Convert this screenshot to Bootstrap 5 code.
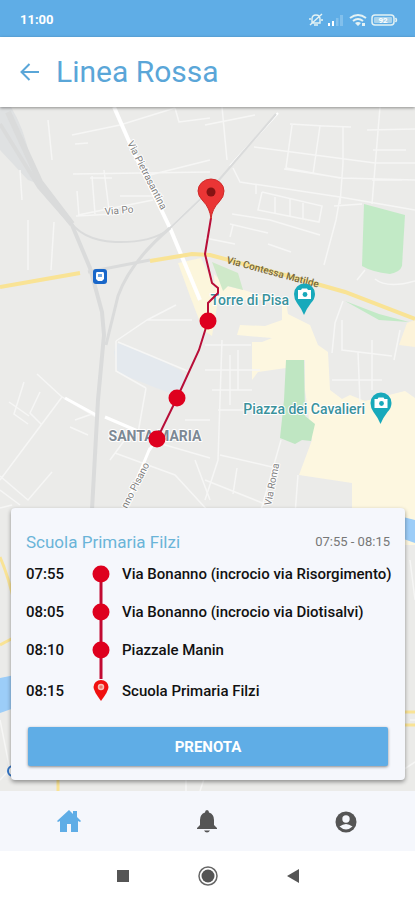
<!DOCTYPE html>
<html lang="it">
<head>
<meta charset="utf-8">
<meta name="viewport" content="width=device-width, initial-scale=1">
<title>Linea Rossa</title>
<link href="https://cdn.jsdelivr.net/npm/bootstrap@5.3.0/dist/css/bootstrap.min.css" rel="stylesheet">
<style>
:root { --sky: #5fade6; --panel: #f5f7fc; }
body { font-family: Roboto, sans-serif; color: #111; }
.status-bar { background: var(--sky); color: #fff; font-size: 13px; line-height: 16px; padding: 12px 17px 9px 20px; }
.app-bar { height: 70px; padding: 0 20px; box-shadow: 0 1px 3px rgba(0,0,0,.4); z-index: 2; }
.app-bar h1 { font-size: 30px; line-height: 36px; color: #5aa6d8; }
.map-area { padding: 11px 10px 11px 11px; background: #ebebe9; }
.map-area .route-map { inset: 0; }
.trip-card { background: var(--panel); border-radius: 4px; box-shadow: 0 2px 4px rgba(0,0,0,.4); padding: 21px 15px 14px; }
.trip-title { font-size: 17px; line-height: 26px; color: #6ab4d8; }
.trip-hours { font-size: 13px; line-height: 20px; color: #777; }
.stop-row { height: 38px; font-size: 15px; line-height: 20px; font-weight: 500; white-space: nowrap; }
.stop-row:last-child { height: 44px; }
.stop-time { flex: 0 0 60px; }
.stop-rail { flex: 0 0 30px; width: 30px; margin-right: 6px; }
.book-row { padding: 14px 2px 0; }
.btn-prenota { --bs-btn-bg: var(--sky); --bs-btn-color: #fff; --bs-btn-hover-bg: #4a9dda; --bs-btn-hover-color: #fff; --bs-btn-active-bg: #4a9dda; --bs-btn-active-color: #fff; height: 39px; font-size: 15px; line-height: 20px; font-weight: 700; border: 0; border-radius: 2px; box-shadow: 0 1px 3px rgba(0,0,0,.45); padding: 0; }
.tab-bar { background: var(--panel); height: 60px; }
.tab-bar a { color: #555; }
.tab-bar a.active { color: var(--sky); }
.system-bar { height: 49px; gap: 61px; padding: 0; }
.system-bar button { width: 24px; height: 24px; }
.lbl { paint-order: stroke; stroke: #fff; stroke-width: 2px; stroke-linejoin: round; }
</style>
</head>
<body>
<div class="d-flex flex-column min-vh-100 bg-white">
  <div class="status-bar d-flex justify-content-between align-items-center">
    <span class="fw-bold">11:00</span>
    <svg width="90" height="16" viewBox="308 12 90 16" fill="none" stroke="#e4f2f4" aria-hidden="true">
      <path d="M312 23v-4c0-3 2-4 4-4s4 1 4 4v4zM314 25h4M310 25l12-11M309 19h2M321 20h2" stroke-width="1.4"/>
      <path d="M328 26v-3h2v3zM332 26v-5h2v5z" fill="#fff" stroke="none"/>
      <path d="M336 26v-8h2.500v8zM340 26v-11h3v11z" fill="#82c0ec" stroke="none"/>
      <path d="M350 18q8-6 16 0M353 21q5-4 10 0" stroke-width="2"/>
      <path d="M355 23q3-2 6 0l-3 3zM362 23h3v3h-3z" fill="#e4f2f4" stroke="none"/>
      <rect x="372" y="15" width="22" height="10" rx="3" stroke-width="1.500"/>
      <path d="M395.500 18q2 2 0 4" stroke-width="1.500"/>
      <rect x="374" y="17" width="18" height="6" rx="1" fill="#a9d3ec" stroke="none"/>
      <text x="383" y="23" text-anchor="middle" font-size="8" font-weight="700" fill="#fff" stroke="none">92</text>
    </svg>
  </div>

  <header class="app-bar d-flex align-items-center bg-white position-relative">
    <a href="#" class="d-flex me-3" aria-label="Indietro">
      <svg width="20" height="20" viewBox="0 0 20 20" fill="none" stroke="#5aa6d8" stroke-width="2"><path d="M19 10H2M9.500 2L1.500 10l8 8"/></svg>
    </a>
    <h1 class="m-0 fw-normal">Linea Rossa</h1>
  </header>

  <main class="map-area flex-grow-1 position-relative overflow-hidden d-flex flex-column justify-content-end">
    <svg class="route-map position-absolute w-100 h-100" viewBox="0 107 415 684" preserveAspectRatio="xMidYMid slice" role="img" aria-label="Mappa di Pisa">
      <rect y="107" width="415" height="684" fill="#ebebe9"/>
      <!-- built-up and commercial zones -->
      <path d="M178 263L201 258 213 283 218 300 212 336 203 330 190 296z" fill="#fcf6dc"/>
      <path d="M214 274l12 12 18 4 24 8 18 4 2 12 22 11 8 20 10 7 2 38 12 9 8-4 15 6 40-10 10 7V545H352V483L299 475 312 440 305 390V360H286V368L258 372 252 380V342H262L272 338 237 335 240 325 265 326 282 320 282 306 260 300H216z" fill="#fdf7e0"/>
      <path d="M415 320v27l-16-2 8-22z" fill="#fcf3da"/>
      <path d="M118 343Q150 354 180 370L188 382 177 396 118 373 114 352z" fill="#e4e9ee"/>
      <path d="M0 107H11Q24 128 30 158L39 184 28 180 0 150z" fill="#dfe1e2"/>
      <!-- parks -->
      <g fill="#c2eac6">
        <path d="M364 204L405 215 402 266Q400 272 390 274Q372 272 362 266z"/>
        <path d="M286 360L304 360 305 416 315 424 311 441 302 440 295 444 280 438 284 400z" fill="#bfe6c2"/>
        <path d="M212 262L238 273 243 290 228 286 223 291z" fill="#cfe9c9"/>
        <path d="M345 301l34 13 30 8-30-2z"/>
      </g>
      <!-- river Arno -->
      <path d="M395 515L415 520V543L395 536z" fill="#9ccdf8"/>
      <path d="M0 678L20 674V706L0 713z" fill="#9ccdf8"/>
      <!-- minor streets -->
      <g fill="none" stroke="#f6f6f5" stroke-width="1.500">
        <path d="M72 135L120 125 175 108M48 120L52 160M73 174L210 172M78 215L153 200M104 170l5 40M92 176l3 38M77 191l2 25M88 143l-13 1M90 178h22M76 216l38-2M120 196h42M20 170L22 200M28 220v50M54 222l-3 48M175 108l4 14 31-4M150 175L210 160"/>
        <path d="M222 107L227 160M205 125l50-10M290 124L324 126 351 127M292 125L286 168 340 178M320 126L313 174M343 127V163L340 204M380 107L372 204M367 130L415 129M254 147L375 163 415 163M284 169L342 178 415 180M233 168L240 182 340 197 415 210M256 184v10M262 192L322 206 319 222 258 210 262 192M275 197v17M290 199v17M303 203v16M340 197L336 220 324 265M232 214L270 220 320 235M233 225l-3 12M230 224l38 9M205 238l30 6M268 244l23 8M372 180h30M373 150h33M365 270l-8 10M375 279q12 10 40 2M343 301l-8 22-3 30M362 204l-28 2"/>
        <path d="M37 374L62 397 98 418M62 397L0 480M24 382L14 414 28 424M75 420l17-6M40 392l-10 21 12 12M9 402l20 14M70 427l18 8M0 476L28 500 52 472M116 341L147 320H192M147 320L176 305M118 342l72 30M116 341v30l30 17M146 388l-8 45M115 453l60 22 35 38M132 430l-22 30M210 420l-25 0M148 440l62 18M195 460l15 40M0 490l20 15"/>
        <path d="M222 340L218 460 205 500M205 345h46M230 355v50M205 370h55M212 390h40M238 350v40M218 410h63M281 440l-20 70M220 455l52 12M237 468l-4 26M298 475l-3 40M205 480l60 24M342 320v30l50 6M358 352l2 50M400 330l-6 30M332 380h50M372 340v50"/>
        <path d="M0 508l12-3M0 720l12 60M0 780l20-22M410 560l5 40M395 775l20-13M410 720h5M200 791l5-15M186 791v-12"/>
      </g>
      <g fill="none" stroke="#fff">
        <path d="M114 107L135 155 170 228 200 300" stroke-width="4"/>
        <path d="M65 398L98 416M105 417L140 432M148 452L157 439M124 510L150 448" stroke-width="3"/>
        <path d="M278 113L230 166M170 228L210 190" stroke-width="2"/>
      </g>
      <!-- railways -->
      <g fill="none" stroke="#dadbdb">
        <path d="M0 124L39 187 72 225 90 268 102 312 104 335 98 400 92 510" stroke-width="4"/>
        <path d="M8 112L40 182 72 224" stroke-width="6"/>
        <path d="M68 218Q80 240 115 242Q150 243 168 230L212 188 276 114" stroke-width="2"/>
        <path d="M170 228Q130 262 118 296L106 345" stroke-width="3"/>
        <path d="M88 272L150 260" stroke-width="3"/>
      </g>
      <!-- main roads -->
      <g fill="none" stroke="#f9e395" stroke-width="4">
        <path d="M0 287L80 273M150 261L192 254 210 255 285 275 345 292 415 319"/>
        <path d="M0 557Q8 575 15 605M15 637L0 645M58 776v15M405 712h10M405 725h10" stroke-width="3"/>
      </g>
      <!-- street labels -->
      <g font-size="10" fill="#7f7f7f">
        <text class="lbl" transform="translate(127 143) rotate(63)">Via Pietrasantina</text>
        <text class="lbl" transform="translate(105 215) rotate(-5)">Via Po</text>
        <text class="lbl" transform="translate(127 509) rotate(-63)">nno Pisano</text>
        <text class="lbl" transform="translate(271 506) rotate(-79)">Via Roma</text>
        <text transform="translate(226 263) rotate(15)" font-weight="500" fill="#786a3c">Via Contessa Matilde</text>
      </g>
      <!-- station and place markers -->
      <rect x="93" y="269" width="14" height="15" rx="3" fill="#1967c9"/>
      <path d="M97 272h6q1 0 1 2v5l-2 2h-4l-2-2v-5q0-2 1-2z" fill="#fff"/>
      <path d="M98 274h4v3h-4z" fill="#6ea5e2"/>
      <circle cx="13" cy="771" r="5" fill="none" stroke="#3274c6" stroke-width="2"/>
      <g font-size="14" font-weight="500" fill="#3b929c">
        <text class="lbl" x="289" y="305" text-anchor="end">Torre di Pisa</text>
        <text class="lbl" x="365" y="414" text-anchor="end">Piazza dei Cavalieri</text>
      </g>
      <g id="photo-pin">
        <path d="M304 315Q301 308 297 303Q294 299 294 294a10.500 10.500 0 0 1 21 0Q315 299 311 303Q307 308 304 315z" fill="#18a9bb"/>
        <path d="M298 290h3l1-1.500h5l1 1.500h3v9h-13z" fill="#fff"/><circle cx="305" cy="294.500" r="2.400" fill="#18a9bb"/>
      </g>
      <use href="#photo-pin" x="76.500" y="109"/>
      <text x="155" y="441" text-anchor="middle" font-size="14" font-weight="700" fill="#7d8995" class="lbl">SANTA MARIA</text>
      <!-- bus route -->
      <path d="M211 218L205 254 212 283 218 288V293L208 303V321L199 350 177 398 157 439" fill="none" stroke="#b80e38" stroke-width="2"/>
      <g fill="#de001e"><circle cx="208" cy="321" r="8.500"/><circle cx="177" cy="398" r="8.500"/><circle cx="157" cy="439" r="8.500"/></g>
      <path d="M211 219Q210 208 203 201Q198 196 198 191a13 12 0 0 1 26 0Q224 197 219 202Q212 209 211 219z" fill="#ea3535" stroke="#cf2929" stroke-width="1"/>
      <circle cx="211" cy="192" r="4.500" fill="#851313"/>
    </svg>

    <section class="trip-card position-relative">
      <div class="d-flex justify-content-between align-items-center">
        <h2 class="trip-title m-0 fw-normal">Scuola Primaria Filzi</h2>
        <span class="trip-hours">07:55 - 08:15</span>
      </div>
      <div class="stops">
        <div class="stop-row d-flex align-items-center">
          <span class="stop-time">07:55</span>
          <svg class="stop-rail h-100" viewBox="0 0 30 38" aria-hidden="true"><path d="M15 19v19" stroke="#c10a32" stroke-width="3"/><circle cx="15" cy="19" r="8.500" fill="#de001e"/></svg>
          <span>Via Bonanno (incrocio via Risorgimento)</span>
        </div>
        <div class="stop-row d-flex align-items-center">
          <span class="stop-time">08:05</span>
          <svg class="stop-rail h-100" viewBox="0 0 30 38" aria-hidden="true"><path d="M15 0v38" stroke="#c10a32" stroke-width="3"/><circle cx="15" cy="19" r="8.500" fill="#de001e"/></svg>
          <span>Via Bonanno (incrocio via Diotisalvi)</span>
        </div>
        <div class="stop-row d-flex align-items-center">
          <span class="stop-time">08:10</span>
          <svg class="stop-rail h-100" viewBox="0 0 30 38" aria-hidden="true"><path d="M15 0v38" stroke="#c10a32" stroke-width="3"/><circle cx="15" cy="19" r="8.500" fill="#de001e"/></svg>
          <span>Piazzale Manin</span>
        </div>
        <div class="stop-row d-flex align-items-center">
          <span class="stop-time">08:15</span>
          <svg class="stop-rail h-100" viewBox="0 0 30 44" aria-hidden="true"><path d="M15 0v10" stroke="#c10a32" stroke-width="3"/><path d="M15 32Q7.500 22 7.500 18a7.500 7 0 0 1 15 0Q22.500 22 15 32z" fill="#f01010"/><circle cx="15" cy="18" r="2.500" fill="#ef7a6c" stroke="#f7c1b8" stroke-width="1.500"/></svg>
          <span>Scuola Primaria Filzi</span>
        </div>
      </div>
      <div class="book-row"><button type="button" class="btn btn-prenota w-100">PRENOTA</button></div>
    </section>
  </main>

  <nav class="tab-bar row g-0 align-items-center text-center">
    <a href="#" class="col active" aria-label="Home"><svg width="24" height="24" viewBox="0 0 24 24" fill="currentColor"><path d="M12 1L0 12l1 1 2-1v11h7v-8h4v8h7V12l2 1 1-1-4-4V2h-4v3z"/></svg></a>
    <a href="#" class="col" aria-label="Notifiche"><svg width="22" height="24" viewBox="0 0 22 24" fill="currentColor"><path d="M11 1q2 0 2 2.500Q18 5 18 11v5l3 3v1H1v-1l3-3v-5q0-6 5-7.500Q9 1 11 1zM8 21.500h6q-1 2-3 2t-3-2z"/></svg></a>
    <a href="#" class="col" aria-label="Profilo"><svg width="22" height="22" viewBox="0 0 22 22"><circle cx="11" cy="11" r="10.500" fill="currentColor"/><circle cx="11" cy="8" r="3.700" fill="#f5f7fc"/><path d="M4.500 15.500q6.500-5 13 0-6.500 6-13 0z" fill="#f5f7fc"/></svg></a>
  </nav>

  <div class="system-bar d-flex justify-content-center align-items-center">
    <button type="button" class="btn p-0 border-0 d-flex align-items-center justify-content-center" aria-label="App recenti"><svg width="14" height="14" viewBox="0 0 14 14"><path d="M1 1h12v12H1z" fill="#555"/></svg></button>
    <button type="button" class="btn p-0 border-0 d-flex align-items-center justify-content-center" aria-label="Schermata principale"><svg width="20" height="20" viewBox="0 0 20 20"><circle cx="10" cy="10" r="9" fill="none" stroke="#666" stroke-width="1.500"/><circle cx="10" cy="10" r="6.500" fill="#555"/></svg></button>
    <button type="button" class="btn p-0 border-0 d-flex align-items-center justify-content-center" aria-label="Indietro"><svg width="14" height="14" viewBox="0 0 14 14"><path d="M13 0v14L1 7z" fill="#555"/></svg></button>
  </div>
</div>
<script src="https://cdn.jsdelivr.net/npm/bootstrap@5.3.0/dist/js/bootstrap.bundle.min.js"></script>
</body>
</html>
